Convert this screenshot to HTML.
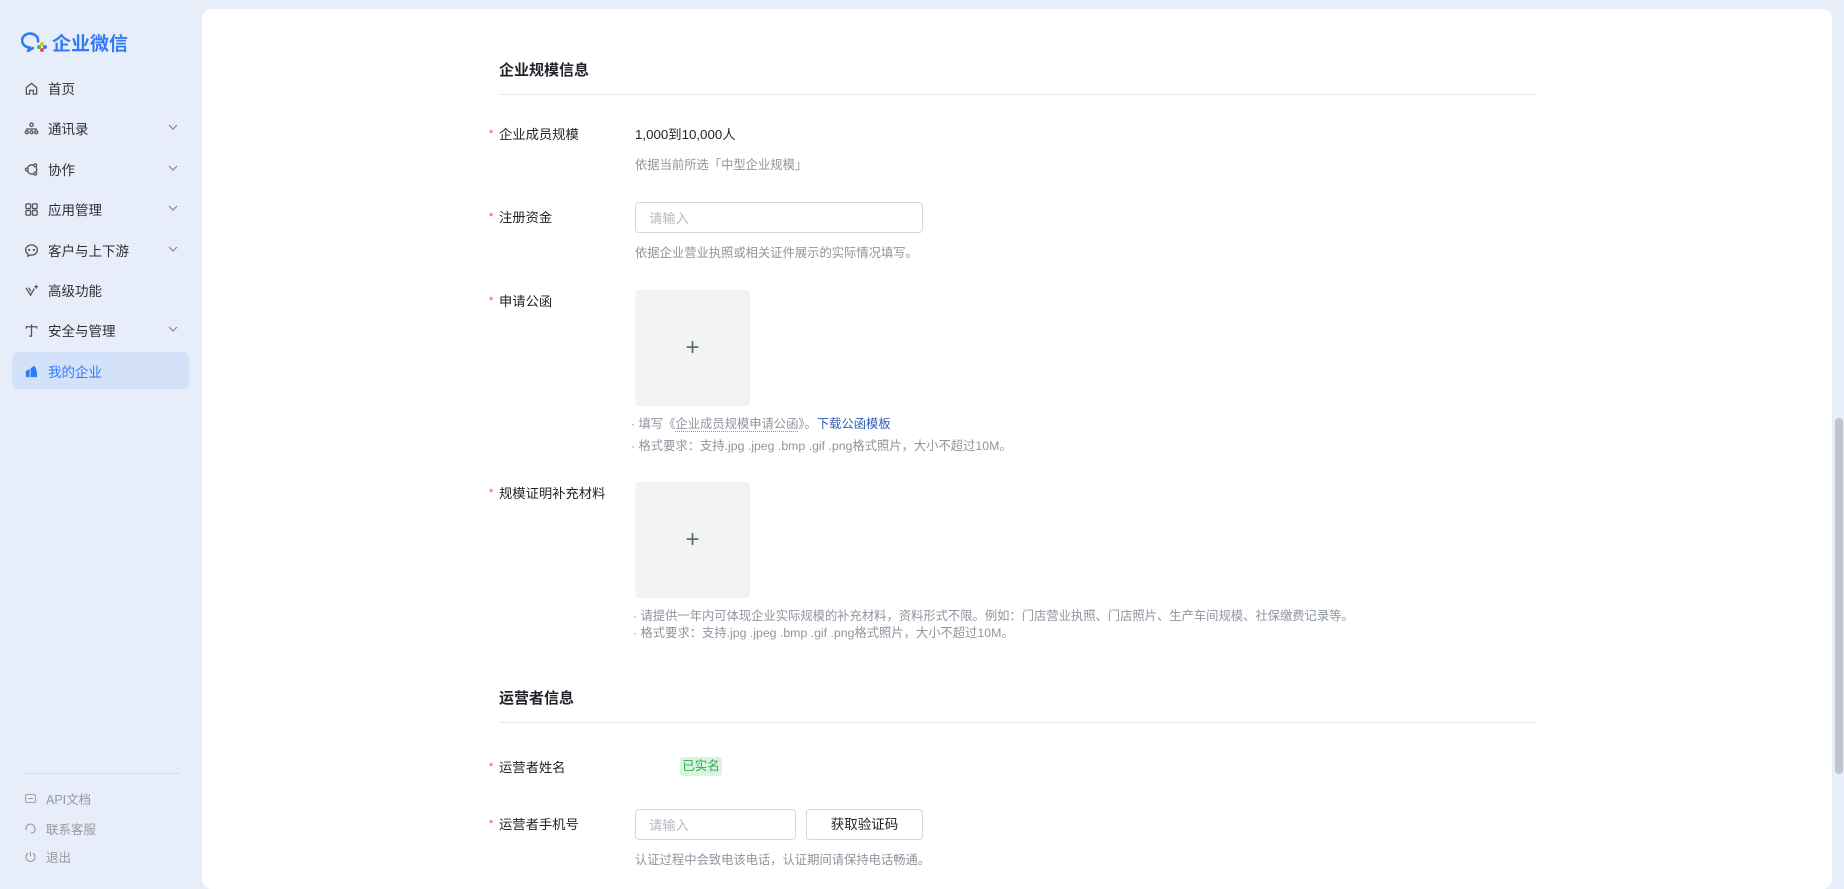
<!DOCTYPE html>
<html><head><meta charset="utf-8">
<style>
*{margin:0;padding:0;box-sizing:border-box}
body{width:1844px;height:878px;overflow:hidden;background:#e8eef9;font-family:"Liberation Sans","Noto Sans CJK SC",sans-serif;position:relative;color:#1f2329}
.a{position:absolute;white-space:nowrap}
.nav{position:absolute;left:24px;font-size:13.5px;color:#2c2f36;display:flex;align-items:center}
.nav svg{width:15px;height:15px;margin-right:9px}
.chev{position:absolute;left:168px;width:10px;height:10px}
.card{position:absolute;left:202px;top:9px;width:1630px;height:880px;background:#fff;border-radius:10px}
.lbl{position:absolute;left:489px;font-size:13.3px;color:#1f2329}
.lbl i{font-style:normal;color:#f54a45;font-size:11px;display:inline-block;width:10px;vertical-align:2px}
.hint{position:absolute;left:635px;font-size:12.3px;color:#8f959e;white-space:nowrap}
.h{position:absolute;left:499px;font-size:15px;font-weight:bold;color:#1f2329}
.hr{position:absolute;left:499px;width:1037px;height:1px;background:#e6e8ee}
.inp{position:absolute;border:1px solid #d5d8de;border-radius:4px;font-size:13.3px;color:#b5b9c0;padding-left:13px;display:flex;align-items:center}
.up{position:absolute;left:635px;width:115px;height:116px;background:#f2f3f3;border-radius:4px;display:flex;align-items:center;justify-content:center;color:#646a73;font-size:24px;font-weight:300}
</style></head><body>
<svg class="a" style="left:21px;top:30px" width="27" height="24" viewBox="0 0 27 24"><path d="M17 11.5A8 7 0 1 0 9 17.5L7 21L12 18" fill="none" stroke="#2f7cf6" stroke-width="2.6" stroke-linecap="round" stroke-linejoin="round"/><circle cx="21" cy="14" r="2" fill="#f5b400"/><circle cx="18" cy="17" r="2" fill="#2fbe5b"/><circle cx="24" cy="17" r="2" fill="#2f7cf6"/><circle cx="21" cy="20" r="2" fill="#f54a45"/></svg>
<div class="a" style="left:52px;top:29px;font-size:19px;font-weight:bold;color:#2f7cf6">企业微信</div>

<div class="nav" style="top:78px"><svg viewBox="0 0 16 16" fill="none" stroke="#555" stroke-width="1.4"><path d="M2.5 7L8 2.5 13.5 7V14H10V10H6V14H2.5Z"/></svg>首页</div>
<div class="nav" style="top:118px"><svg viewBox="0 0 16 16" fill="none" stroke="#555" stroke-width="1.4"><circle cx="8" cy="4" r="1.8"/><circle cx="3" cy="12" r="1.6"/><circle cx="8" cy="12" r="1.6"/><circle cx="13" cy="12" r="1.6"/><path d="M3 10V8.5H13V10"/></svg>通讯录</div>
<div class="nav" style="top:159px"><svg viewBox="0 0 16 16" fill="none" stroke="#555" stroke-width="1.4"><circle cx="8.5" cy="8" r="5"/><circle cx="3" cy="8" r="1.5" fill="#e8eef9"/><circle cx="12" cy="3.5" r="1.5" fill="#e8eef9"/><circle cx="12" cy="12.5" r="1.5" fill="#e8eef9"/></svg>协作</div>
<div class="nav" style="top:199px"><svg viewBox="0 0 16 16" fill="none" stroke="#555" stroke-width="1.4"><rect x="2" y="2" width="5" height="5" rx="1"/><rect x="9" y="2" width="5" height="5" rx="1"/><rect x="2" y="9" width="5" height="5" rx="1"/><rect x="9" y="9" width="5" height="5" rx="1"/></svg>应用管理</div>
<div class="nav" style="top:240px"><svg viewBox="0 0 16 16" fill="none" stroke="#555" stroke-width="1.4"><path d="M8 2C4.5 2 1.8 4.5 1.8 7.5c0 1.8 1 3.3 2.5 4.3L4 14l2.8-1.2c.4.1.8.1 1.2.1 3.5 0 6.2-2.4 6.2-5.4S11.5 2 8 2z"/><circle cx="5.5" cy="7.5" r=".5" fill="#555"/><circle cx="10.5" cy="7.5" r=".5" fill="#555"/></svg>客户与上下游</div>
<div class="nav" style="top:280px"><svg viewBox="0 0 16 16" fill="none" stroke="#555" stroke-width="1.4"><path d="M2 5L7 13L11 6"/><path d="M5 5L7.5 9"/><path d="M13 2V6M11 4H15"/></svg>高级功能</div>
<div class="nav" style="top:320px"><svg viewBox="0 0 16 16" fill="none" stroke="#555" stroke-width="1.4"><path d="M8 1.5V3.5M2.5 6V4H13.5V6M8 4V14H5.5"/></svg>安全与管理</div>
<div class="a" style="left:12px;top:352px;width:177px;height:37px;background:#d3e2f8;border-radius:6px"></div>
<div class="nav" style="top:361px;color:#2f7cf6"><svg viewBox="0 0 16 16"><path d="M2 7.5L6 5.5V14H2Z M7 4.5L11 2C13 4 14 8 14 14H7Z" fill="#2f7cf6"/></svg>我的企业</div>
<svg class="chev" style="top:122px" viewBox="0 0 10 10"><path d="M1 3L5 7 9 3" fill="none" stroke="#888" stroke-width="1.2"/></svg>
<svg class="chev" style="top:163px" viewBox="0 0 10 10"><path d="M1 3L5 7 9 3" fill="none" stroke="#888" stroke-width="1.2"/></svg>
<svg class="chev" style="top:203px" viewBox="0 0 10 10"><path d="M1 3L5 7 9 3" fill="none" stroke="#888" stroke-width="1.2"/></svg>
<svg class="chev" style="top:244px" viewBox="0 0 10 10"><path d="M1 3L5 7 9 3" fill="none" stroke="#888" stroke-width="1.2"/></svg>
<svg class="chev" style="top:324px" viewBox="0 0 10 10"><path d="M1 3L5 7 9 3" fill="none" stroke="#888" stroke-width="1.2"/></svg>

<div class="a" style="left:23px;top:773px;width:156px;height:1px;background:#d6dbe5"></div>
<div class="nav" style="top:789px;font-size:12.5px;color:#9499a0"><svg viewBox="0 0 16 16" fill="none" stroke="#999" stroke-width="1.2" style="width:13px;height:13px"><rect x="2" y="3" width="12" height="10" rx="1.5"/><path d="M5 8H11"/></svg>API文档</div>
<div class="nav" style="top:819px;font-size:12.5px;color:#9499a0"><svg viewBox="0 0 16 16" fill="none" stroke="#999" stroke-width="1.4" style="width:13px;height:13px"><path d="M2.5 10V8a5.5 5.5 0 0 1 11 0v2M13.5 10c0 2-2 3.5-5 3.5"/></svg>联系客服</div>
<div class="nav" style="top:847px;font-size:12.5px;color:#9499a0"><svg viewBox="0 0 16 16" fill="none" stroke="#999" stroke-width="1.3" style="width:13px;height:13px"><path d="M5 4A5.5 5.5 0 1 0 11 4M8 2V8"/></svg>退出</div>

<div class="card"></div>
<div class="a" style="left:1835px;top:418px;width:8px;height:356px;background:#c1c4cb;border-radius:4px"></div>

<div class="h" style="top:59px">企业规模信息</div>
<div class="hr" style="top:94px"></div>

<div class="lbl" style="top:124px"><i>*</i>企业成员规模</div>
<div class="a" style="left:635px;top:124px;font-size:13.3px;color:#1f2329">1,000到10,000人</div>
<div class="hint" style="top:155px">依据当前所选「中型企业规模」</div>

<div class="lbl" style="top:207px"><i>*</i>注册资金</div>
<div class="inp" style="left:635px;top:202px;width:288px;height:31px">请输入</div>
<div class="hint" style="top:243px">依据企业营业执照或相关证件展示的实际情况填写。</div>

<div class="lbl" style="top:291px"><i>*</i>申请公函</div>
<div class="up" style="top:290px">+</div>
<div class="hint" style="top:414px;left:631px">· 填写《<span style="border-bottom:1px dotted #8f959e">企业成员规模申请公函</span>》。<span style="color:#2f5fb3">下载公函模板</span></div>
<div class="hint" style="top:436px;left:631px">· 格式要求：支持.jpg .jpeg .bmp .gif .png格式照片，大小不超过10M。</div>

<div class="lbl" style="top:483px"><i>*</i>规模证明补充材料</div>
<div class="up" style="top:482px">+</div>
<div class="hint" style="top:606px;left:633px">· 请提供一年内可体现企业实际规模的补充材料，资料形式不限。例如：门店营业执照、门店照片、生产车间规模、社保缴费记录等。</div>
<div class="hint" style="top:623px;left:633px">· 格式要求：支持.jpg .jpeg .bmp .gif .png格式照片，大小不超过10M。</div>

<div class="h" style="top:687px">运营者信息</div>
<div class="hr" style="top:722px"></div>

<div class="lbl" style="top:757px"><i>*</i>运营者姓名</div>
<div class="a" style="left:680px;top:757px;width:42px;height:19px;background:#d9f5e0;border-radius:3px;color:#34a853;font-size:12.5px;text-align:center;line-height:19px">已实名</div>

<div class="lbl" style="top:814px"><i>*</i>运营者手机号</div>
<div class="inp" style="left:635px;top:809px;width:161px;height:31px">请输入</div>
<div class="a" style="left:806px;top:809px;width:117px;height:31px;border:1px solid #d5d8de;border-radius:4px;font-size:13.5px;color:#1f2329;text-align:center;line-height:29px">获取验证码</div>
<div class="hint" style="top:850px">认证过程中会致电该电话，认证期间请保持电话畅通。</div>
</body></html>
